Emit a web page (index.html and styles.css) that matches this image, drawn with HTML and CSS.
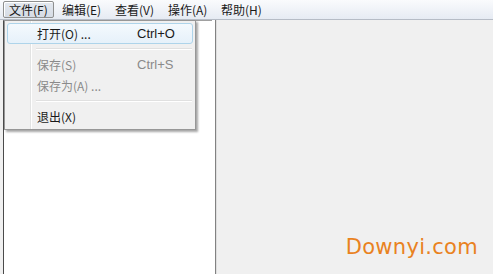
FILE: index.html
```html
<!DOCTYPE html>
<html lang="zh-CN">
<head>
  <meta charset="UTF-8">
  <title>文件管理</title>
  <link rel="stylesheet" href="styles.css">
</head>
<body>
  <div class="menubar">
    <span class="menu open">文件(F)</span>
    <span class="menu">编辑(E)</span>
    <span class="menu">查看(V)</span>
    <span class="menu">操作(A)</span>
    <span class="menu">帮助(H)</span>
  </div>
  <div class="main">
    <div class="left"></div>
    <div class="split"></div>
    <div class="right">
      <span class="mark">Downyi.com</span>
    </div>
  </div>

  <div class="dropdown">
    <div class="item hot"><span class="label">打开(O) ...</span><span class="key">Ctrl+O</span></div>
    <div class="sep"></div>
    <div class="item off"><span class="label">保存(S)</span><span class="key">Ctrl+S</span></div>
    <div class="item off"><span class="label">保存为(A) ...</span><span class="key"></span></div>
    <div class="sep"></div>
    <div class="item"><span class="label">退出(X)</span><span class="key"></span></div>
  </div>
</body>
</html>
```
FILE: styles.css
```css
body {
  margin: 0;
  height: 274px;
  overflow: hidden;
  background-color: #f0f0f0;
  font-family: "Liberation Sans", "Noto Sans CJK SC", sans-serif;
  font-size: 12px;
  color: #1a1a1a;
  display: flex;
  flex-direction: column;
}
.menubar {
  height: 19px;
  display: flex;
  align-items: center;
  padding-left: 3px;
  background: linear-gradient(#fafbfd, #e6ebf3);
  border-bottom: 1px solid #b6bcc6;
}
.menu {
  box-sizing: border-box;
  width: 51px;
  height: 17px;
  line-height: 15px;
  padding-left: 5px;
  margin-right: 2px;
  border: 1px solid transparent;
  font-family: "Noto Sans CJK SC", sans-serif;
  white-space: nowrap;
}
.menu.open {
  border-color: #8e8f8f;
  border-radius: 2px;
  background: linear-gradient(#e3e8ef, #d6dce5);
  box-shadow: inset 1px 1px 0 #ffffff;
}
.main {
  flex: 1;
  display: flex;
}
.left {
  margin-left: 3px;
  width: 208px;
  background-color: #ffffff;
  border-left: 1px solid #4a4a4a;
  border-top: 1px solid #a0a0a0;
}
.split {
  width: 3px;
  background-color: #ffffff;
  border-right: 1px solid #828282;
  box-shadow: 1px 0 0 #dedede;
}
.right {
  flex: 1;
  position: relative;
}
.mark {
  position: absolute;
  right: 15px;
  bottom: 15px;
  font-family: "DejaVu Sans", sans-serif;
  font-size: 21px;
  letter-spacing: 0.3px;
  color: #e9821f;
}
.dropdown {
  position: absolute;
  left: 4px;
  top: 20px;
  width: 186px;
  padding: 2px;
  background: linear-gradient(90deg, #f1f1f1 0, #f1f1f1 25px, #e2e3e3 25px, #e2e3e3 26px, #ffffff 26px, #ffffff 27px, #f0f0f0 27px);
  border: 1px solid #979797;
  box-shadow: 2px 2px 2px rgba(0, 0, 0, 0.35);
}
.item {
  height: 19px;
  display: flex;
  align-items: center;
  border: 1px solid transparent;
  border-radius: 3px;
  font-family: "Noto Sans CJK SC", sans-serif;
}
.item .label {
  padding-left: 29px;
  width: 100px;
}
.item .key {
  font-family: "Liberation Sans", sans-serif;
  font-size: 13px;
}
.item.hot {
  border-color: #aed4ea;
  background: linear-gradient(#f4f9fd, #e6f1fa);
}
.item.off {
  color: #8a8a8a;
}
.sep {
  height: 1px;
  margin: 4px 1px 4px 29px;
  background-color: #e0e0e0;
  border-bottom: 1px solid #ffffff;
}
```
